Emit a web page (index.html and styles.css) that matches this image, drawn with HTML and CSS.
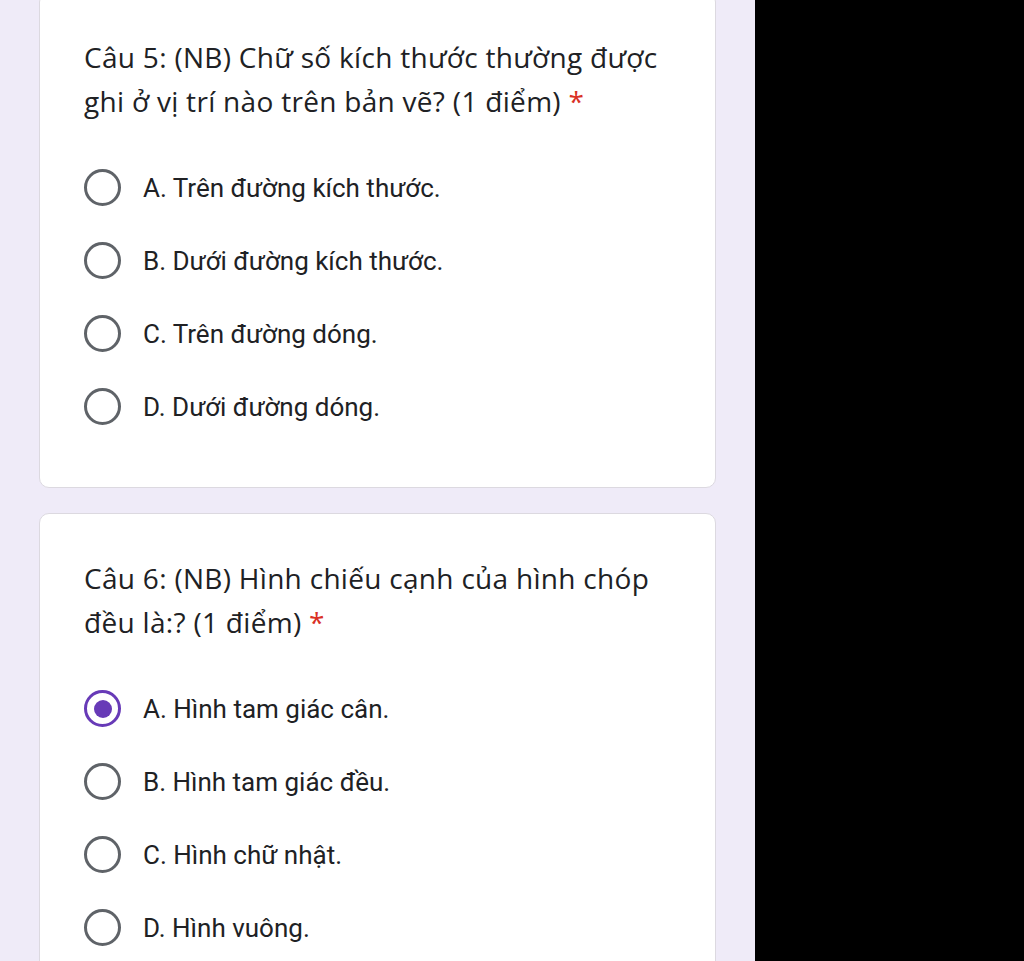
FILE: index.html
```html
<!DOCTYPE html>
<html lang="vi">
<head>
<meta charset="utf-8">
<link rel="stylesheet" href="styles.css">
</head>
<body>
<div class="screen">
  <main class="form">
    <section class="card card-first">
      <div class="title">Câu 5: (NB) Chữ số kích thước thường được ghi ở vị trí nào trên bản vẽ? (1 điểm) <span class="req">*</span></div>
      <div class="options">
        <div class="option"><span class="radio"></span><span class="label">A. Trên đường kích thước.</span></div>
        <div class="option"><span class="radio"></span><span class="label">B. Dưới đường kích thước.</span></div>
        <div class="option"><span class="radio"></span><span class="label">C. Trên đường dóng.</span></div>
        <div class="option"><span class="radio"></span><span class="label">D. Dưới đường dóng.</span></div>
      </div>
    </section>
    <section class="card">
      <div class="title">Câu 6: (NB) Hình chiếu cạnh của hình chóp đều là:? (1 điểm) <span class="req">*</span></div>
      <div class="options">
        <div class="option"><span class="radio checked"></span><span class="label">A. Hình tam giác cân.</span></div>
        <div class="option"><span class="radio"></span><span class="label">B. Hình tam giác đều.</span></div>
        <div class="option"><span class="radio"></span><span class="label">C. Hình chữ nhật.</span></div>
        <div class="option"><span class="radio"></span><span class="label">D. Hình vuông.</span></div>
      </div>
    </section>
  </main>
  <div class="blackout"></div>
</div>
</body>
</html>
```

FILE: styles.css
```css
html, body {
  margin: 0;
  padding: 0;
  height: 100%;
  overflow: hidden;
}
body {
  background: #000;
}
.screen {
  display: flex;
  height: 961px;
  overflow: hidden;
}
.form {
  width: 755px;
  flex: none;
  background: #efebf8;
  padding: 0 39px;
  box-sizing: border-box;
  display: flex;
  flex-direction: column;
  gap: 25px;
}
.blackout {
  flex: 1;
  background: #000;
}
.card {
  background: #fff;
  border: 1px solid #dcd9e0;
  border-radius: 10px;
  padding: 42px 44px 44px 44px;
  flex: none;
}
.card-first {
  margin-top: -8px;
}
.title {
  font-family: "Open Sans", "Noto Sans", sans-serif;
  font-size: 28px;
  line-height: 44px;
  color: #202124;
  letter-spacing: 0.3px;
}
.req {
  color: #d93025;
}
.options {
  margin-top: 28px;
  display: flex;
  flex-direction: column;
}
.option {
  height: 73px;
  display: flex;
  align-items: center;
}
.radio {
  width: 37px;
  height: 37px;
  box-sizing: border-box;
  border: 3.5px solid #5f6368;
  border-radius: 50%;
  flex: none;
  display: flex;
  align-items: center;
  justify-content: center;
}
.radio.checked {
  border-color: #673ab7;
}
.radio.checked::after {
  content: "";
  width: 18px;
  height: 18px;
  border-radius: 50%;
  background: #673ab7;
}
.label {
  margin-left: 22px;
  font-family: Roboto, "Noto Sans", sans-serif;
  font-size: 26px;
  color: #202124;
}
```
